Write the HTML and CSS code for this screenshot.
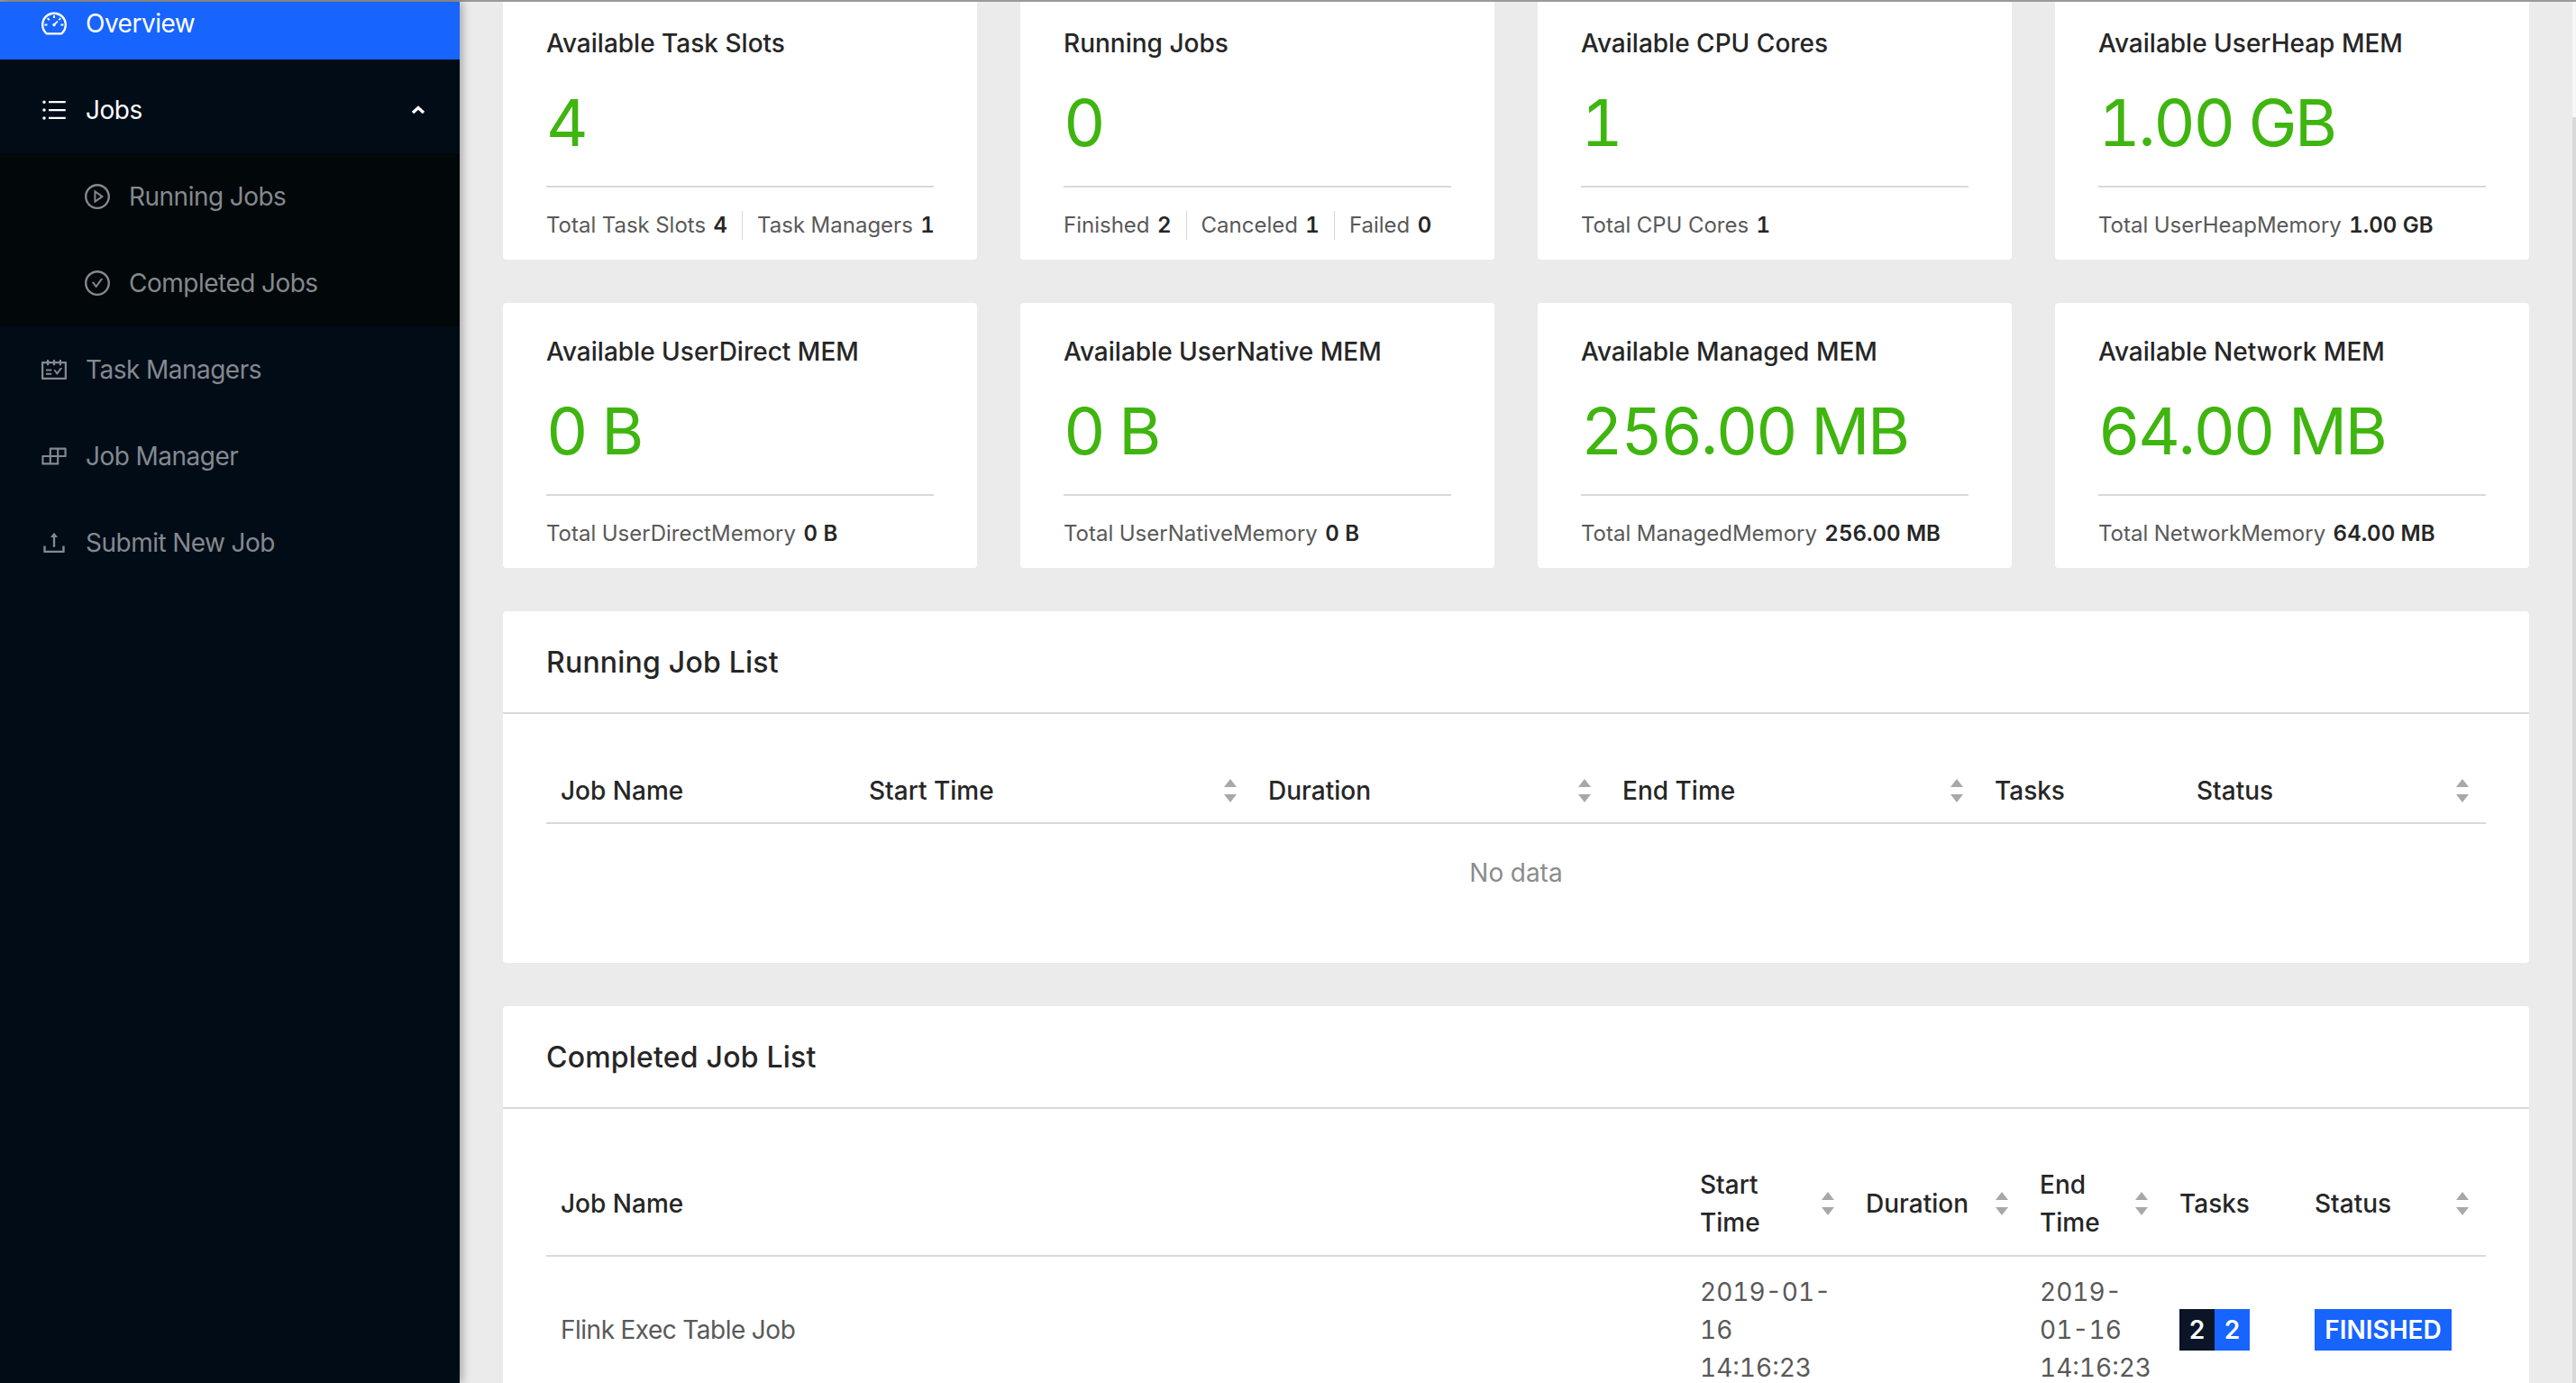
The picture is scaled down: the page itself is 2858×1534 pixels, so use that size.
FILE: index.html
```html
<!DOCTYPE html>
<html lang="en">
<head>
    <meta charset="UTF-8">
    <title>Apache Flink Dashboard</title>
    <link rel="stylesheet" href="styles.css">
</head>
<body>
    <div class="topline"></div>
    <div class="layout">
        <nav class="sidebar">
            <a class="menu-item overview">
                <svg class="icon" viewBox="0 0 1024 1024"><path d="M924.8 385.6a446.7 446.7 0 0 0-96-142.4 446.7 446.7 0 0 0-142.4-96C631.1 123.8 572.5 112 512 112s-119.1 11.8-174.4 35.2a446.7 446.7 0 0 0-142.4 96 446.7 446.7 0 0 0-96 142.4C75.8 440.9 64 499.5 64 560c0 132.7 58.3 257.7 159.9 343.1l1.7 1.4c5.8 4.8 13.1 7.5 20.6 7.5h531.7c7.5 0 14.8-2.7 20.6-7.5l1.7-1.4C901.7 817.7 960 692.7 960 560c0-60.5-11.9-119.1-35.2-174.4zM761.4 836H262.6A371.12 371.12 0 0 1 140 560c0-99.4 38.7-192.8 109-263 70.3-70.3 163.7-109 263-109 99.4 0 192.8 38.7 263 109 70.3 70.3 109 163.7 109 263 0 105.6-44.5 205.5-122.6 276zM623.5 421.5a8.03 8.03 0 0 0-11.3 0L527.7 506c-18.7-5-39.4-.2-54.1 14.5a55.95 55.95 0 0 0 0 79.2 55.95 55.95 0 0 0 79.2 0 55.83 55.83 0 0 0 14.5-54.1l84.5-84.5c3.1-3.1 3.1-8.2 0-11.3l-28.3-28.3zM490 320h44c4.4 0 8-3.6 8-8v-80c0-4.4-3.6-8-8-8h-44c-4.4 0-8 3.6-8 8v80c0 4.4 3.6 8 8 8zm260 218v44c0 4.4 3.6 8 8 8h80c4.4 0 8-3.6 8-8v-44c0-4.4-3.6-8-8-8h-80c-4.4 0-8 3.6-8 8zm12.7-197.2l-31.1-31.1a8.03 8.03 0 0 0-11.3 0l-56.6 56.6a8.03 8.03 0 0 0 0 11.3l31.1 31.1c3.1 3.1 8.2 3.1 11.3 0l56.6-56.6c3.1-3.1 3.1-8.2 0-11.3zm-458.6-31.1a8.03 8.03 0 0 0-11.3 0l-31.1 31.1a8.03 8.03 0 0 0 0 11.3l56.6 56.6c3.1 3.1 8.2 3.1 11.3 0l31.1-31.1c3.1-3.1 3.1-8.2 0-11.3l-56.6-56.6zM262 530h-80c-4.4 0-8 3.6-8 8v44c0 4.4 3.6 8 8 8h80c4.4 0 8-3.6 8-8v-44c0-4.4-3.6-8-8-8z"/></svg>
                <span>Overview</span>
            </a>
            <a class="menu-item open">
                <svg class="icon" viewBox="0 0 1024 1024"><path d="M912 192H328c-4.4 0-8 3.6-8 8v56c0 4.4 3.6 8 8 8h584c4.4 0 8-3.6 8-8v-56c0-4.4-3.6-8-8-8zm0 284H328c-4.4 0-8 3.6-8 8v56c0 4.4 3.6 8 8 8h584c4.4 0 8-3.6 8-8v-56c0-4.4-3.6-8-8-8zm0 284H328c-4.4 0-8 3.6-8 8v56c0 4.4 3.6 8 8 8h584c4.4 0 8-3.6 8-8v-56c0-4.4-3.6-8-8-8zM104 228a56 56 0 1 0 112 0 56 56 0 1 0-112 0zm0 284a56 56 0 1 0 112 0 56 56 0 1 0-112 0zm0 284a56 56 0 1 0 112 0 56 56 0 1 0-112 0z"/></svg>
                <span>Jobs</span>
                <svg class="arrow" viewBox="0 0 16 10"><polyline points="2,8 8,2.5 14,8"/></svg>
            </a>
            <div class="submenu">
                <a class="menu-item sub">
                    <svg class="icon" viewBox="0 0 1024 1024"><path d="M512 64C264.6 64 64 264.6 64 512s200.6 448 448 448 448-200.6 448-448S759.4 64 512 64zm0 820c-205.4 0-372-166.6-372-372s166.6-372 372-372 372 166.6 372 372-166.6 372-372 372z"/><path d="M719.4 499.1l-296.1-215A15.9 15.9 0 0 0 398 297v430c0 13.1 14.8 20.5 25.3 12.9l296.1-215a15.9 15.9 0 0 0 0-25.8zm-257.6 134V390.9L628.5 512 461.8 633.1z"/></svg>
                    <span>Running Jobs</span>
                </a>
                <a class="menu-item sub">
                    <svg class="icon" viewBox="0 0 1024 1024"><path d="M699 353h-46.9c-10.2 0-19.9 4.9-25.9 13.3L469 584.3l-71.2-98.8c-6-8.3-15.6-13.3-25.9-13.3H325c-6.5 0-10.3 7.4-6.5 12.7l124.6 172.8a31.8 31.8 0 0 0 51.7 0l210.6-292c3.9-5.3.1-12.7-6.4-12.7z"/><path d="M512 64C264.6 64 64 264.6 64 512s200.6 448 448 448 448-200.6 448-448S759.4 64 512 64zm0 820c-205.4 0-372-166.6-372-372s166.6-372 372-372 372 166.6 372 372-166.6 372-372 372z"/></svg>
                    <span>Completed Jobs</span>
                </a>
            </div>
            <a class="menu-item">
                <svg class="icon" viewBox="0 0 1024 1024"><path d="M928 224H768v-56c0-4.4-3.6-8-8-8h-56c-4.4 0-8 3.6-8 8v56H548v-56c0-4.4-3.6-8-8-8h-56c-4.4 0-8 3.6-8 8v56H328v-56c0-4.4-3.6-8-8-8h-56c-4.4 0-8 3.6-8 8v56H96c-17.7 0-32 14.3-32 32v576c0 17.7 14.3 32 32 32h832c17.7 0 32-14.3 32-32V256c0-17.7-14.3-32-32-32zm-40 568H136V296h120v56c0 4.4 3.6 8 8 8h56c4.4 0 8-3.6 8-8v-56h148v56c0 4.4 3.6 8 8 8h56c4.4 0 8-3.6 8-8v-56h148v56c0 4.4 3.6 8 8 8h56c4.4 0 8-3.6 8-8v-56h120v496zM416 496H232c-4.4 0-8 3.6-8 8v48c0 4.4 3.6 8 8 8h184c4.4 0 8-3.6 8-8v-48c0-4.4-3.6-8-8-8zm0 136H232c-4.4 0-8 3.6-8 8v48c0 4.4 3.6 8 8 8h184c4.4 0 8-3.6 8-8v-48c0-4.4-3.6-8-8-8zm308.2-177.4L620.6 598.3l-52.8-73.1c-3-4.2-7.8-6.6-12.9-6.6H500c-6.5 0-10.3 7.4-6.5 12.7l114.1 158.2a15.9 15.9 0 0 0 25.8 0l165-228.7c3.8-5.3 0-12.7-6.5-12.7H737c-5 0-9.8 2.5-12.8 6.5z"/></svg>
                <span>Task Managers</span>
            </a>
            <a class="menu-item">
                <svg class="icon" viewBox="0 0 1024 1024"><path d="M916 210H376c-17.7 0-32 14.3-32 32v236H108c-17.7 0-32 14.3-32 32v272c0 17.7 14.3 32 32 32h540c17.7 0 32-14.3 32-32V546h236c17.7 0 32-14.3 32-32V242c0-17.7-14.3-32-32-32zm-504 68h200v200H412V278zm-68 468H144V546h200v200zm268 0H412V546h200v200zm268-268H680V278h200v200z"/></svg>
                <span>Job Manager</span>
            </a>
            <a class="menu-item">
                <svg class="icon" viewBox="0 0 1024 1024"><path d="M400 317.7h73.9V656c0 4.4 3.6 8 8 8h60c4.4 0 8-3.6 8-8V317.7H624c6.7 0 10.4-7.7 6.3-12.9L518.3 163a8 8 0 0 0-12.6 0l-112 141.7c-4.1 5.3-.4 13 6.3 13zM878 626h-60c-4.4 0-8 3.6-8 8v154H214V634c0-4.4-3.6-8-8-8h-60c-4.4 0-8 3.6-8 8v198c0 17.7 14.3 32 32 32h684c17.7 0 32-14.3 32-32V634c0-4.4-3.6-8-8-8z"/></svg>
                <span>Submit New Job</span>
            </a>
        </nav>
        <main class="main">
            <div class="stats">
                <div class="stat-card">
                    <div class="stat-title">Available Task Slots</div>
                    <div class="stat-value">4</div>
                    <div class="stat-foot"><span>Total Task Slots <b>4</b></span><span>Task Managers <b>1</b></span></div>
                </div>
                <div class="stat-card">
                    <div class="stat-title">Running Jobs</div>
                    <div class="stat-value">0</div>
                    <div class="stat-foot"><span>Finished <b>2</b></span><span>Canceled <b>1</b></span><span>Failed <b>0</b></span></div>
                </div>
                <div class="stat-card">
                    <div class="stat-title">Available CPU Cores</div>
                    <div class="stat-value">1</div>
                    <div class="stat-foot"><span>Total CPU Cores <b>1</b></span></div>
                </div>
                <div class="stat-card">
                    <div class="stat-title">Available UserHeap MEM</div>
                    <div class="stat-value">1.00 GB</div>
                    <div class="stat-foot"><span>Total UserHeapMemory <b>1.00 GB</b></span></div>
                </div>
                <div class="stat-card">
                    <div class="stat-title">Available UserDirect MEM</div>
                    <div class="stat-value">0 B</div>
                    <div class="stat-foot"><span>Total UserDirectMemory <b>0 B</b></span></div>
                </div>
                <div class="stat-card">
                    <div class="stat-title">Available UserNative MEM</div>
                    <div class="stat-value">0 B</div>
                    <div class="stat-foot"><span>Total UserNativeMemory <b>0 B</b></span></div>
                </div>
                <div class="stat-card">
                    <div class="stat-title">Available Managed MEM</div>
                    <div class="stat-value">256.00 MB</div>
                    <div class="stat-foot"><span>Total ManagedMemory <b>256.00 MB</b></span></div>
                </div>
                <div class="stat-card">
                    <div class="stat-title">Available Network MEM</div>
                    <div class="stat-value">64.00 MB</div>
                    <div class="stat-foot"><span>Total NetworkMemory <b>64.00 MB</b></span></div>
                </div>
            </div>

            <section class="list-card">
                <h2>Running Job List</h2>
                <div class="list-body">
                    <table class="running">
                        <thead>
                            <tr>
                                <th class="col-name"><div class="th-in">Job Name</div></th>
                                <th class="col-start"><div class="th-in">Start Time<i class="sort"></i></div></th>
                                <th class="col-duration"><div class="th-in">Duration<i class="sort"></i></div></th>
                                <th class="col-end"><div class="th-in">End Time<i class="sort"></i></div></th>
                                <th class="col-tasks"><div class="th-in">Tasks</div></th>
                                <th class="col-status"><div class="th-in">Status<i class="sort"></i></div></th>
                            </tr>
                        </thead>
                    </table>
                    <div class="no-data">No data</div>
                </div>
            </section>

            <section class="list-card">
                <h2>Completed Job List</h2>
                <div class="list-body">
                    <table class="completed">
                        <thead>
                            <tr>
                                <th class="col-name"><div class="th-in">Job Name</div></th>
                                <th class="col-start"><div class="th-in">Start Time<i class="sort"></i></div></th>
                                <th class="col-duration"><div class="th-in">Duration<i class="sort"></i></div></th>
                                <th class="col-end"><div class="th-in">End Time<i class="sort"></i></div></th>
                                <th class="col-tasks"><div class="th-in">Tasks</div></th>
                                <th class="col-status"><div class="th-in">Status<i class="sort"></i></div></th>
                            </tr>
                        </thead>
                        <tbody>
                            <tr>
                                <td class="job-name">Flink Exec Table Job</td>
                                <td>2019-01-16 14:16:23</td>
                                <td></td>
                                <td>2019-01-16 14:16:23</td>
                                <td><span class="tasks"><em>2</em><em class="blue">2</em></span></td>
                                <td><span class="status">FINISHED</span></td>
                            </tr>
                        </tbody>
                    </table>
                </div>
            </section>
        </main>
        <div class="scrollbar"></div>
    </div>
</body>
</html>
```

FILE: styles.css
```css
html, body {
    margin: 0;
    padding: 0;
    height: 100%;
    overflow: hidden;
}

body {
    font-family: Inter, "Liberation Sans", sans-serif;
    font-size: 28px;
    font-variant-numeric: tabular-nums;
    background: #ebebeb;
    display: flex;
    flex-direction: column;
}

.topline {
    height: 2px;
    background: #9a9a9a;
    flex: none;
}

.layout {
    flex: 1;
    display: flex;
    min-height: 0;
}

/* sidebar */
.sidebar {
    width: 510px;
    flex: none;
    background: #020c17;
    box-shadow: 2px 0 10px rgba(0, 0, 0, 0.35);
    position: relative;
    z-index: 1;
    letter-spacing: -0.5px;
}

.menu-item {
    display: flex;
    align-items: center;
    height: 96px;
    padding: 0 44px;
    color: #84898f;
    box-sizing: border-box;
}

.menu-item .icon {
    width: 32px;
    height: 32px;
    fill: currentColor;
    margin-right: 19px;
    flex: none;
}

.menu-item.overview {
    height: 64px;
    padding-bottom: 16px;
    margin-bottom: 8px;
    background: #1764ff;
    color: #fff;
}

.menu-item.open {
    color: #fff;
}

.menu-item .arrow {
    width: 16px;
    height: 10px;
    margin-left: auto;
    margin-right: -6px;
    fill: none;
    stroke: #fff;
    stroke-width: 3.4;
}

.submenu {
    background: #020709;
}

.menu-item.sub {
    padding-left: 92px;
}

/* main column */
.main {
    flex: 1;
    min-width: 0;
    padding: 0 48px;
    overflow: hidden;
}

.stats {
    display: grid;
    grid-template-columns: repeat(4, minmax(0, 1fr));
    gap: 48px;
    margin-top: -8px;
}

.stat-card {
    background: #fff;
    border-radius: 4px;
    padding: 36px 48px 0;
    height: 294px;
    box-sizing: border-box;
}

.stat-title {
    font-weight: 500;
    color: #262626;
    line-height: 36px;
}

.stat-value {
    color: #3fb50f;
    font-size: 72px;
    line-height: 88px;
    letter-spacing: -2.4px;
    margin-top: 26px;
    height: 114px;
    border-bottom: 2px solid #d9d9d9;
}

.stat-foot {
    display: flex;
    margin-top: 26px;
    font-size: 24px;
    line-height: 32px;
    color: #595959;
}

.stat-foot span {
    padding-right: 16px;
    margin-right: 16px;
    border-right: 1px solid #d9d9d9;
    white-space: nowrap;
}

.stat-foot span:last-child {
    border-right: none;
    margin-right: 0;
    padding-right: 0;
}

.stat-foot b {
    font-weight: 600;
    color: #262626;
    margin-left: 2px;
}

.list-card {
    background: #fff;
    border-radius: 4px;
    margin-top: 48px;
}

.list-card h2 {
    margin: 0;
    font-size: 32px;
    font-weight: 500;
    letter-spacing: 0.2px;
    color: #262626;
    height: 112px;
    line-height: 114px;
    padding: 0 48px;
    border-bottom: 2px solid #d9d9d9;
}

.list-body {
    padding: 48px;
}

table {
    width: 100%;
    border-collapse: collapse;
    table-layout: fixed;
}

th {
    box-sizing: border-box;
    padding: 16px 16px 14px;
    font-weight: 500;
    color: #262626;
    text-align: left;
    line-height: 42px;
    border-bottom: 2px solid #d9d9d9;
}

td {
    padding: 18px 16px;
    color: #595959;
    line-height: 42px;
}

.job-name {
    letter-spacing: -0.5px;
}

.th-in {
    display: flex;
    align-items: center;
    justify-content: space-between;
}

.running .col-name { width: 342px; }
.running .col-start { width: 443px; }
.running .col-duration { width: 393px; }
.running .col-end { width: 413px; }
.running .col-tasks { width: 224px; }

.completed .col-start { width: 184px; }
.completed .col-duration { width: 193px; }
.completed .col-end { width: 155px; }
.completed .col-tasks { width: 150px; }
.completed .col-status { width: 206px; }

.completed th {
    padding-top: 15px;
    padding-bottom: 15px;
}

/* sort carets */
.sort {
    flex: none;
    width: 16px;
    height: 26px;
    margin-right: 2px;
    position: relative;
}

.sort::before,
.sort::after {
    content: "";
    position: absolute;
    left: 1px;
    border-left: 7px solid transparent;
    border-right: 7px solid transparent;
}

.sort::before {
    top: 0;
    border-bottom: 9px solid #a8a8a8;
}

.sort::after {
    bottom: 0;
    border-top: 9px solid #a8a8a8;
}

.no-data {
    text-align: center;
    color: #8c8c8c;
    height: 106px;
    padding-top: 36px;
    box-sizing: border-box;
    line-height: 36px;
}

.tasks {
    display: inline-flex;
    vertical-align: middle;
}

.tasks em,
.status {
    font-style: normal;
    font-weight: 600;
    color: #fff;
    line-height: 46px;
}

.tasks em {
    width: 39px;
    text-align: center;
    background: #0c1427;
}

.tasks em.blue {
    background: #1764ff;
}

.status {
    display: inline-block;
    width: 152px;
    text-align: center;
    background: #1764ff;
    vertical-align: middle;
}

.scrollbar {
    width: 4px;
    flex: none;
    background: linear-gradient(#f6f6f6 128px, #d9d9d9 128px);
}
```
